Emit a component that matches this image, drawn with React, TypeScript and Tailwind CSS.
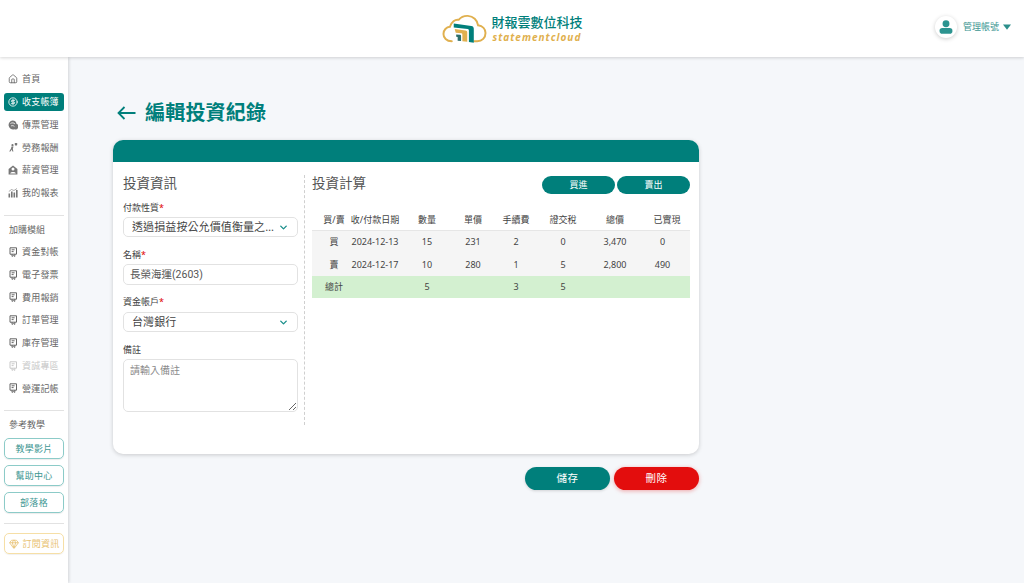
import { ChevronDown, Gem, Home, CircleDollarSign } from "lucide-react";
import type { ReactNode } from "react";

const font = "font-['Noto_Sans','Noto_Sans_CJK_TC',sans-serif]";

const moduleItems = ["資金對帳", "電子發票", "費用報銷", "訂單管理", "庫存管理", "資誠專區", "營運記帳"];

const rows = [
  ["買", "2024-12-13", "15", "231", "2", "0", "3,470", "0"],
  ["賣", "2024-12-17", "10", "280", "1", "5", "2,800", "490"],
];

function NavItem({ icon, label, active, muted }: { icon: ReactNode; label: string; active?: boolean; muted?: boolean }) {
  return (
    <div
      className={`flex h-[18px] items-center gap-[4px] rounded-[3px] pl-[4px] text-[9px] tracking-[0.2px] ${
        active ? "bg-[#007f7b] text-white" : muted ? "text-[#c8c8c8]" : "text-[#666666]"
      }`}
    >
      <span className="flex w-[10px] justify-center">{icon}</span>
      {label}
    </div>
  );
}

function ModuleIcon() {
  return (
    <svg width="9" height="10" viewBox="0 0 9 10" fill="none" stroke="currentColor" strokeWidth="1">
      <path d="M1 .8h6.500v6.400H1z" />
      <path d="M2.600 2.800h3M2.600 4.600h2M3 7.200v2.200l1.400-.8 1.400.8V7.200" />
    </svg>
  );
}

function VoucherIcon() {
  return (
    <svg width="10" height="10" viewBox="0 0 10 10" fill="#777777">
      <path d="M4.500.5a4 4 0 0 1 4 3.200 3 3 0 0 1-2.200 5.600A4.500 4.500 0 0 1 .6 5.500 4.500 4.500 0 0 1 4.500.5z" />
      <path d="M2.500 3.500c1.500-1 3.500-.8 4.500.5M3 6c1-.6 2.500-.5 3.400.5" stroke="#ffffff" strokeWidth=".8" fill="none" />
    </svg>
  );
}

function LaborIcon() {
  return (
    <svg width="10" height="10" viewBox="0 0 10 10" fill="#777777">
      <circle cx="4.500" cy="3.200" r="1.100" />
      <path d="M3.500 4.500h2L4.800 7l.6 2.500H4.400L3.800 7.600 2.400 9.500H1.200L3 6.500z" />
      <rect x="6.800" y="1" width="2.400" height="2.400" rx=".6" />
    </svg>
  );
}

function SalaryIcon() {
  return (
    <svg width="10" height="10" viewBox="0 0 10 10" fill="#777777">
      <path d="M.6 4 5 .6 9.400 4v5.400H.6z" />
      <circle cx="5" cy="4" r="1.500" fill="#ffffff" />
      <path d="M2.200 8.400C2.800 6.600 7.200 6.600 7.800 8.400z" fill="#ffffff" />
    </svg>
  );
}

function ReportIcon() {
  return (
    <svg width="10" height="10" viewBox="0 0 10 10" fill="#777777">
      <rect x=".5" y="5.500" width="1.600" height="4" />
      <rect x="3" y="3.500" width="1.600" height="6" />
      <rect x="5.500" y="4.500" width="1.600" height="5" />
      <rect x="8" y="2" width="1.600" height="7.500" />
      <path d="M.8 3.500 3.500 1.500l2.500 1L9 .5" stroke="#777777" strokeWidth=".6" fill="none" />
    </svg>
  );
}

function OutlineLink({ label }: { label: string }) {
  return (
    <div className="flex h-[21px] items-center justify-center rounded-[5px] border border-[#8ccbc8] text-[9px] tracking-[0.3px] text-[#3d9692] shadow-[0_1px_1px_rgba(0,0,0,0.08)]">
      {label}
    </div>
  );
}

function Sidebar() {
  return (
    <aside className="flex w-[68px] shrink-0 flex-col bg-white px-[4px] pt-[13px] shadow-[1px_0_3px_rgba(0,0,0,0.14)]">
      <div className="flex flex-col gap-[4.750px]">
        <NavItem icon={<Home size={10} />} label="首頁" />
        <NavItem active icon={<CircleDollarSign size={10} />} label="收支帳簿" />
        <NavItem icon={<VoucherIcon />} label="傳票管理" />
        <NavItem icon={<LaborIcon />} label="勞務報酬" />
        <NavItem icon={<SalaryIcon />} label="薪資管理" />
        <NavItem icon={<ReportIcon />} label="我的報表" />
      </div>
      <div className="mt-[13px] border-t border-[#e2e2e2]" />
      <div className="mt-[7px] h-[13px] pl-[5px] text-[9px] leading-[13px] text-[#666666]">加購模組</div>
      <div className="mt-[7px] flex flex-col gap-[4.750px]">
        {moduleItems.map((label) => (
          <NavItem key={label} icon={<ModuleIcon />} label={label} muted={label === "資誠專區"} />
        ))}
      </div>
      <div className="mt-[13px] border-t border-[#e2e2e2]" />
      <div className="mt-[7px] h-[13px] pl-[5px] text-[9px] leading-[13px] text-[#666666]">參考教學</div>
      <div className="mt-[7px] flex flex-col gap-[6px]">
        <OutlineLink label="教學影片" />
        <OutlineLink label="幫助中心" />
        <OutlineLink label="部落格" />
      </div>
      <div className="mt-[10px] border-t border-[#e2e2e2]" />
      <div className="mt-[9px] flex h-[21px] items-center justify-center gap-[4px] rounded-[5px] border border-[#f6dfa6] text-[9px] tracking-[0.2px] text-[#e8c272] shadow-[0_1px_1px_rgba(0,0,0,0.06)]">
        <Gem size={10} />
        訂閱資訊
      </div>
    </aside>
  );
}

function Logo() {
  return (
    <div className="flex items-center gap-[4px]">
      <svg width="45" height="30" viewBox="0 0 46 30" fill="none">
        <path
          d="M10 27.500C4.500 27.500 1.500 23.800 1.500 20c0-4 3-7 6.600-7.200C9.500 7.500 13.500 5 17 5.600 19.500 2.600 23 1.400 26.500 1.600c5.500.4 9.600 4.400 10.400 9.600 4.600.6 7.600 4 7.600 8 0 4.600-3.400 8.300-8.500 8.300h-3"
          stroke="#e0b04f"
          strokeWidth="2"
          strokeLinecap="round"
        />
        <path d="M12 9.500l18 2.500c1.500.2 2.500 1.200 2.500 2.800V29l-5-.6V16.500c0-.8-.5-1.300-1.200-1.400L12 13.500z" fill="#007f7b" />
        <path d="M13 15l11 1.500c1 .1 1.800.8 1.800 1.800V28l-5-.6v-6.900c0-.7-.4-1.100-1-1.200L14 18.800z" fill="#e0b04f" />
        <path d="M14.500 20.500l4 .5c.6.1 1 .5 1 1.200V27.300l-3.500-.4v-3.600L14.500 23z" fill="#2c6e6b" />
      </svg>
      <div className="flex flex-col">
        <span className="text-[13px] font-medium leading-[17px] text-[#007f7b]">財報雲數位科技</span>
        <span className="pl-[1px] font-['Open_Sans',sans-serif] text-[10px] font-bold italic leading-[13px] tracking-[1px] text-[#dfb04e]">
          statementcloud
        </span>
      </div>
    </div>
  );
}

function Header() {
  return (
    <header className="relative z-10 flex h-[57px] shrink-0 items-center bg-white shadow-[0_1px_3px_rgba(0,0,0,0.16)]">
      <div className="flex flex-1 justify-center pl-[1px]">
        <Logo />
      </div>
      <div className="absolute right-[13px] top-[16px] flex items-center">
        <div className="flex h-[22px] w-[22px] items-center justify-center rounded-full bg-white shadow-[0_1px_4px_rgba(0,0,0,0.2)]">
          <svg width="14" height="14" viewBox="0 0 13 13" fill="#2c9490">
            <circle cx="6.500" cy="3.500" r="3.200" />
            <rect x="0.500" y="7.500" width="12" height="5.200" rx="2.600" />
          </svg>
        </div>
        <span className="ml-[6px] text-[9px] text-[#3d9692]">管理帳號</span>
        <svg className="ml-[4px]" width="8" height="6" viewBox="0 0 8 6" fill="#2c8f8b">
          <path d="M0 .500h8L4 5.800z" />
        </svg>
      </div>
    </header>
  );
}

function FieldLabel({ text, required }: { text: string; required?: boolean }) {
  return (
    <div className="h-[14px] text-[9px] leading-[14px] text-[#444444]">
      {text}
      {required && <span className="text-[#e00000]">*</span>}
    </div>
  );
}

function SelectBox({ value }: { value: string }) {
  return (
    <div className="flex h-[20px] items-center rounded-[5px] border border-[#e2e2e2] bg-white pl-[8px] pr-[8px]">
      <span className="flex-1 truncate text-[11px] tracking-[0.1px] text-[#444444]">{value}</span>
      <ChevronDown size={11} strokeWidth={3} className="ml-[3px] shrink-0 text-[#1a8f8b]" />
    </div>
  );
}

function InfoForm() {
  return (
    <div className="flex w-[175px] shrink-0 flex-col">
      <h2 className="h-[18px] text-[13.500px] leading-[16px] text-[#555555]">投資資訊</h2>
      <div className="mb-[2px] mt-[8px]">
        <FieldLabel text="付款性質" required />
      </div>
      <SelectBox value="透過損益按公允價值衡量之金融資產" />
      <div className="mb-[2px] mt-[11px]">
        <FieldLabel text="名稱" required />
      </div>
      <div className="flex h-[21px] items-center rounded-[5px] border border-[#e2e2e2] bg-white pl-[6px] font-['Roboto','Noto_Sans_CJK_TC',sans-serif] text-[10.500px] text-[#555555]">
        長榮海運(2603)
      </div>
      <div className="mb-[3px] mt-[10px]">
        <FieldLabel text="資金帳戶" required />
      </div>
      <SelectBox value="台灣銀行" />
      <div className="mb-[2px] mt-[11px]">
        <FieldLabel text="備註" />
      </div>
      <textarea
        readOnly
        placeholder="請輸入備註"
        className="h-[53px] rounded-[5px] border border-[#e2e2e2] bg-white px-[6px] py-[2px] text-[10px] leading-[16px] text-[#555555] outline-none placeholder:text-[#8a8a8a]"
      />
    </div>
  );
}

function PillButton({ label }: { label: string }) {
  return (
    <button className="flex h-[18px] w-[73px] items-center justify-center rounded-full bg-[#007f7b] text-[9px] text-white">
      {label}
    </button>
  );
}

const headCols = ["買/賣", "收/付款日期", "數量", "單價", "手續費", "證交稅", "總價", "已實現"];

function CalcTable() {
  return (
    <table className="mt-[16px] w-[378px] table-fixed border-collapse text-center text-[9px] text-[#444444]">
      <colgroup>
        <col className="w-[38px]" />
        <col className="w-[50px]" />
        <col className="w-[54px]" />
        <col className="w-[38px]" />
        <col className="w-[48px]" />
        <col className="w-[46px]" />
        <col className="w-[58px]" />
        <col className="w-[46px]" />
      </colgroup>
      <thead>
        <tr className="h-[20px] border-b border-[#e6e6e6]">
          {headCols.map((col, i) => (
            <th key={col} className={`whitespace-nowrap p-0 pb-[1px] font-normal ${i === 0 ? "pl-[6px]" : ""}`}>
              {col}
            </th>
          ))}
        </tr>
      </thead>
      <tbody>
        {rows.map((row) => (
          <tr key={row[1]} className="h-[23px] bg-[#f5f5f5]">
            {row.map((cell, i) => (
              <td key={i} className={`whitespace-nowrap p-0 ${i === 0 ? "pl-[6px]" : ""} ${i === 7 ? "pr-[9px]" : ""}`}>
                {cell}
              </td>
            ))}
          </tr>
        ))}
        <tr className="h-[22px] bg-[#d3f0d0]">
          <td className="whitespace-nowrap p-0 pl-[6px]">總計</td>
          <td className="p-0" />
          <td className="p-0">5</td>
          <td className="p-0" />
          <td className="p-0">3</td>
          <td className="p-0">5</td>
          <td className="p-0" />
          <td className="p-0" />
        </tr>
      </tbody>
    </table>
  );
}

export default function App() {
  return (
    <div className={`flex h-[583px] w-[1024px] flex-col overflow-hidden bg-[#f5f7fa] ${font}`}>
      <Header />
      <div className="flex min-h-0 flex-1">
        <Sidebar />
        <main className="w-[631px] pl-[45px] pt-[42px]">
          <h1 className="flex h-[28px] items-center text-[20px] font-bold tracking-[0.2px] text-[#007f7b]">
            <svg className="ml-[4px] mr-[9px]" width="19" height="14" viewBox="0 0 19 14" fill="none" stroke="#007f7b" strokeWidth="1.800">
              <path d="M18.500 7H1.500M7.500 1 1.500 7l6 6" />
            </svg>
            編輯投資紀錄
          </h1>
          <section className="mt-[13px] h-[314px] w-[586px] overflow-hidden rounded-[10px] bg-white shadow-[0_1px_4px_rgba(0,0,0,0.18)]">
            <div className="h-[22px] bg-[#007f7b]" />
            <div className="flex pl-[10px] pt-[13px]">
              <InfoForm />
              <div className="ml-[6px] h-[250px] border-l border-dashed border-[#cfcfcf]" />
              <div className="ml-[7px] w-[378px]">
                <div className="flex items-start justify-between">
                  <h2 className="h-[18px] text-[13.500px] leading-[16px] text-[#555555]">投資計算</h2>
                  <div className="flex gap-[2px] pt-[1px]">
                    <PillButton label="買進" />
                    <PillButton label="賣出" />
                  </div>
                </div>
                <CalcTable />
              </div>
            </div>
          </section>
          <div className="mt-[13px] flex w-[586px] justify-end gap-[4px]">
            <button className="flex h-[23px] w-[85px] items-center justify-center rounded-full bg-[#007f7b] text-[10.500px] tracking-[0.5px] text-white shadow-[0_1px_3px_rgba(0,0,0,0.15)]">
              儲存
            </button>
            <button className="flex h-[23px] w-[85px] items-center justify-center rounded-full bg-[#e30d0d] text-[10.500px] tracking-[0.5px] text-white shadow-[0_1px_4px_rgba(227,13,13,0.35)]">
              刪除
            </button>
          </div>
        </main>
      </div>
    </div>
  );
}
